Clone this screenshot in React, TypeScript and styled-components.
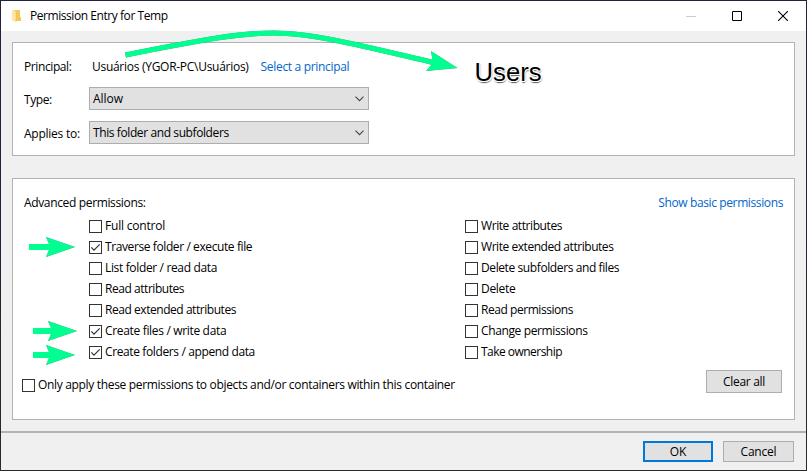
import React from "react";
import styled, { createGlobalStyle } from "styled-components";

const GlobalStyle = createGlobalStyle`
  * { box-sizing: border-box; }
  html, body { margin: 0; padding: 0; overflow: hidden; }
`;

const Desktop = styled.div`
  width: 807px;
  height: 471px;
  padding: 1px;
  background: linear-gradient(#1f2340 0%, #1f2340 45%, #2b2727 75%, #2d2a20 100%);
  font-family: "Open Sans", "Noto Sans", sans-serif;
  font-size: 12px;
  line-height: 16px;
  color: #000;
`;

const Dialog = styled.div`
  position: relative;
  display: flex;
  flex-direction: column;
  width: 805px;
  height: 469px;
  background: #f0f0f0;
`;

const Text = styled.span<{ $track?: number }>`
  display: block;
  white-space: nowrap;
  letter-spacing: ${(p) => p.$track ?? -0.2}px;
`;

const TitleBar = styled.header`
  display: flex;
  align-items: center;
  height: 30px;
  padding: 0 0 0 10px;
  background: #fff;
`;

const Title = styled(Text)`
  flex: 1;
  margin-left: 7px;
`;

const CaptionButton = styled.button`
  display: flex;
  align-items: center;
  justify-content: center;
  width: 46px;
  height: 30px;
  padding: 0;
  border: 0;
  background: transparent;
`;

const Panel = styled.section<{ $height: number; $top: number }>`
  width: 783px;
  height: ${(p) => p.$height}px;
  margin: ${(p) => p.$top}px 0 0 11px;
  border: 1px solid #b2b2b2;
  background: #fff;
`;

const PrincipalForm = styled.div`
  display: grid;
  grid-template-columns: 65px 280px;
  grid-template-rows: 23px 23px 23px;
  row-gap: 11px;
  padding: 10px 0 0 11px;
`;

const FieldLabel = styled(Text)<{ $top?: number }>`
  padding-top: ${(p) => p.$top ?? 5}px;
`;

const PrincipalValue = styled.div`
  display: flex;
  gap: 12px;
  padding: 6px 0 0 3px;
`;

const Link = styled(Text)`
  color: #0066cc;
`;

const Select = styled.div`
  display: flex;
  align-items: center;
  justify-content: space-between;
  height: 23px;
  padding: 0 4px 0 3px;
  border: 1px solid #adadad;
  background: #e1e1e1;
`;

const PermissionsHeader = styled.div`
  display: flex;
  justify-content: space-between;
  height: 41px;
  padding: 16px 11px 0 11px;
`;

const Columns = styled.div`
  display: grid;
  grid-template-columns: 376px 300px;
  height: 147px;
  margin-left: 76px;
`;

const Column = styled.div`
  display: flex;
  flex-direction: column;
  gap: 8px;
`;

const CheckRow = styled.label`
  display: flex;
  align-items: center;
  gap: 3px;
  height: 13px;
`;

const CheckText = styled(Text)`
  margin-top: -1px;
`;

const Box = styled.span`
  display: flex;
  flex: none;
  width: 13px;
  height: 13px;
  border: 1px solid #333;
  background: #fff;
`;

const PanelFooter = styled.div`
  display: flex;
  justify-content: space-between;
  padding: 3px 12px 0 9px;
`;

const InheritOption = styled.div`
  padding-top: 9px;
`;

const Button = styled.button<{ $width: number; $height: number; $primary?: boolean }>`
  display: flex;
  align-items: center;
  justify-content: center;
  width: ${(p) => p.$width}px;
  height: ${(p) => p.$height}px;
  padding: 0;
  border: ${(p) => (p.$primary ? "2px solid #0078d7" : "1px solid #adadad")};
  background: #e1e1e1;
  color: #000;
  font: inherit;
`;

const Actions = styled.footer`
  display: flex;
  justify-content: flex-end;
  gap: 10px;
  height: 39px;
  margin-top: 11px;
  padding: 8px 12px 0 0;
  border-top: 2px solid #b3b3b3;
`;

const Annotations = styled.svg`
  position: absolute;
  top: -1px;
  left: -1px;
  pointer-events: none;
  filter: drop-shadow(0.3px 0.8px 0.4px rgba(0, 0, 0, 0.5));
`;

const Callout = styled.span`
  position: absolute;
  top: 56px;
  left: 473.500px;
  font-family: "Liberation Sans", Arial, sans-serif;
  font-size: 25.700px;
  line-height: 30px;
  text-shadow: -1px 0 0 #fff, 1px 0 0 #fff, 0 1px 0 #fff, 0 -1px 0 #fff,
    1px 1px 0 #fff, -1px 1px 0 #fff,
    0.500px 2px 1px rgba(0, 0, 0, 0.6), 1px 1px 2px rgba(0, 0, 0, 0.4);
`;

function FolderIcon() {
  return (
    <svg width="12" height="14" viewBox="0 0 12 14">
      <path d="M2 1h7v7h1v4H2z" fill="#f3c95d" />
      <path d="M1 1h2l2 1.5V13l-4-1.5z" fill="#ffe7a0" />
      <path d="M5 2.5V13" stroke="#eac16d" strokeWidth=".6" />
    </svg>
  );
}

function Chevron() {
  return (
    <svg width="9" height="6" viewBox="0 0 9 6" fill="none">
      <path d="M.5.7 4.5 4.7 8.5.7" stroke="#444" strokeWidth="1.1" />
    </svg>
  );
}

type Permission = { text: string; track?: number; checked?: boolean };

function Check({ text, track, checked }: Permission) {
  return (
    <CheckRow>
      <Box>
        {checked && (
          <svg width="11" height="11" viewBox="0 0 11 11" fill="none">
            <path d="M1.3 5.3 4 8.2 9.7 2.3" stroke="#333" strokeWidth="1.2" />
          </svg>
        )}
      </Box>
      <CheckText $track={track}>{text}</CheckText>
    </CheckRow>
  );
}

const leftPermissions: Permission[] = [
  { text: "Full control", track: -0.2 },
  { text: "Traverse folder / execute file", track: -0.4, checked: true },
  { text: "List folder / read data", track: -0.35 },
  { text: "Read attributes", track: -0.45 },
  { text: "Read extended attributes", track: -0.45 },
  { text: "Create files / write data", track: -0.33, checked: true },
  { text: "Create folders / append data", track: -0.38, checked: true },
];

const rightPermissions: Permission[] = [
  { text: "Write attributes", track: -0.42 },
  { text: "Write extended attributes", track: -0.45 },
  { text: "Delete subfolders and files", track: -0.4 },
  { text: "Delete", track: -0.3 },
  { text: "Read permissions", track: -0.45 },
  { text: "Change permissions", track: -0.37 },
  { text: "Take ownership", track: -0.53 },
];

export default function App() {
  return (
    <Desktop>
      <GlobalStyle />
      <Dialog>
        <TitleBar>
          <FolderIcon />
          <Title $track={-0.44}>Permission Entry for Temp</Title>
          <CaptionButton aria-label="Minimize">
            <svg width="10" height="10"><path d="M0 5.5h10" stroke="#ccc" /></svg>
          </CaptionButton>
          <CaptionButton aria-label="Maximize">
            <svg width="10" height="10"><path d="M.5.5h9v9h-9z" fill="none" stroke="#000" /></svg>
          </CaptionButton>
          <CaptionButton aria-label="Close">
            <svg width="10" height="10"><path d="M0 0 10 10M10 0 0 10" stroke="#000" strokeWidth="1.1" /></svg>
          </CaptionButton>
        </TitleBar>

        <Panel $height={114} $top={11}>
          <PrincipalForm>
            <FieldLabel $track={-0.4} $top={6}>Principal:</FieldLabel>
            <PrincipalValue>
              <Text $track={-0.28}>Usuários (YGOR-PC\Usuários)</Text>
              <Link $track={-0.32}>Select a principal</Link>
            </PrincipalValue>
            <FieldLabel $track={-0.4}>Type:</FieldLabel>
            <Select><Text $track={-0.05}>Allow</Text><Chevron /></Select>
            <FieldLabel $track={-0.25}>Applies to:</FieldLabel>
            <Select><Text $track={-0.4}>This folder and subfolders</Text><Chevron /></Select>
          </PrincipalForm>
        </Panel>

        <Panel $height={242} $top={22}>
          <PermissionsHeader>
            <Text $track={-0.35}>Advanced permissions:</Text>
            <Link $track={-0.38}>Show basic permissions</Link>
          </PermissionsHeader>
          <Columns>
            <Column>{leftPermissions.map((p) => <Check key={p.text} {...p} />)}</Column>
            <Column>{rightPermissions.map((p) => <Check key={p.text} {...p} />)}</Column>
          </Columns>
          <PanelFooter>
            <InheritOption>
              <Check
                text="Only apply these permissions to objects and/or containers within this container"
                track={-0.325}
              />
            </InheritOption>
            <Button $width={76} $height={23}><Text $track={-0.3}>Clear all</Text></Button>
          </PanelFooter>
        </Panel>

        <Actions>
          <Button $width={70} $height={21} $primary><Text>OK</Text></Button>
          <Button $width={71} $height={21}><Text>Cancel</Text></Button>
        </Actions>

        <Annotations width="807" height="471" fill="#00ff90">
          <path d="M125.500 55C205 39 240 33 274 33C315 33 375 49 433 62.500" fill="none" stroke="#00ff90" strokeWidth="5.200" />
          <path d="M431 51 457.500 68 426 71 433 63z" />
          <path d="M29 244h20l-3-7 29 10-29 10 3-7H29z" />
          <path d="M33 328h18l-3-7 29 10-29 10 3-7H33z" />
          <path d="M33 352h16l-3-7 29 10-29 10 3-7H33z" />
        </Annotations>
        <Callout>Users</Callout>
      </Dialog>
    </Desktop>
  );
}
